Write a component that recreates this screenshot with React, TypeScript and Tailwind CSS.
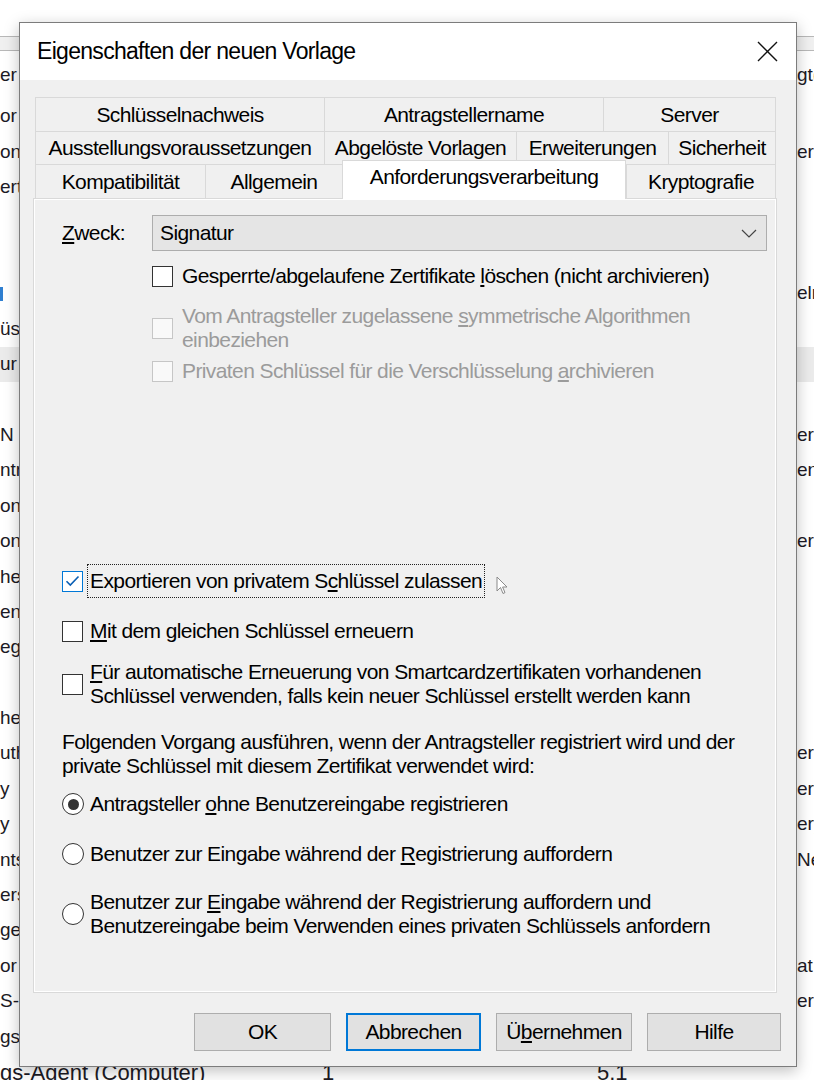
import { ReactNode } from "react";

const leftRows = [
  "or", "ons", "ert", "", "", "", "üs", "ur", "", "N", "ntr", "ont", "ont", "he",
  "en", "eg", "", "hea", "uth", "y", "y", "nts", "ers", "ge", "or", "S-", "gs",
];

const rightRows: Record<number, string> = {
  1: "er", 5: "eln", 9: "er", 10: "en", 12: "er", 18: "er", 19: "ery", 20: "ery", 21: "Ne", 24: "at", 25: "er",
};

function BgRow({ left, right, highlight, blue }: { left: string; right?: string; highlight?: boolean; blue?: boolean }) {
  return (
    <div className={`flex h-[35.4px] items-center justify-between text-[19px] ${highlight ? "bg-[#ebebeb]" : ""}`}>
      <div className="flex w-[30px] overflow-hidden whitespace-nowrap">
        {blue ? <span className="h-[14px] w-[3px] bg-[#2f7fd0]" /> : left}
      </div>
      <div className="w-[17px] overflow-hidden whitespace-nowrap">{right}</div>
    </div>
  );
}

function CheckBox({ checked, disabled }: { checked?: boolean; disabled?: boolean }) {
  const border = checked ? "border-[#0078d7]" : disabled ? "border-[#c6c6c6]" : "border-[#333]";
  return (
    <span className={`flex h-[21px] w-[21px] shrink-0 items-center justify-center border ${border} ${disabled ? "bg-[#f9f9f9]" : "bg-white"}`}>
      {checked && (
        <svg width="15" height="12" viewBox="0 0 15 12">
          <path d="M1.5 6.2 L5.3 10 L13.5 1.5" fill="none" stroke="#0a5fb4" strokeWidth="1.6" />
        </svg>
      )}
    </span>
  );
}

function Radio({ checked }: { checked?: boolean }) {
  return (
    <span className="flex h-[22px] w-[22px] shrink-0 items-center justify-center rounded-full border border-[#333] bg-white">
      {checked && <span className="h-[11px] w-[11px] rounded-full bg-[#333]" />}
    </span>
  );
}

function Tab({ w, children, selected }: { w: string; children: ReactNode; selected?: boolean }) {
  if (selected)
    return (
      <div className={`${w} relative z-10 mb-[-1px] flex h-[39px] items-center justify-center border-x border-t border-[#d9d9d9] bg-white pb-[6px]`}>
        {children}
      </div>
    );
  return (
    <div className={`${w} flex h-full items-center justify-center border-l border-t border-[#d9d9d9] bg-[#f0f0f0] last:border-r`}>
      {children}
    </div>
  );
}

function Btn({ w, children, focus }: { w: string; children: ReactNode; focus?: boolean }) {
  return (
    <div
      className={`${w} flex h-[38px] items-center justify-center bg-[#e1e1e1] ${
        focus ? "border-2 border-[#0078d7]" : "border border-[#adadad]"
      }`}
    >
      {children}
    </div>
  );
}

export default function App() {
  return (
    <div
      className="relative h-[1080px] w-[814px] overflow-hidden bg-white text-[22px] text-[#1c1a24]"
      style={{ fontFamily: "'Liberation Sans', Arial, sans-serif" }}
    >
      {/* list behind the dialog */}
      <div className="pt-[36px]">
        <div className="h-[15px] border-y border-[#b8b8b8] bg-[#f0f0f0]" />
        <div className="flex h-[48px] items-center justify-between text-[19px]">
          <div className="w-[30px] overflow-hidden whitespace-nowrap">er</div>
          <div className="w-[17px] overflow-hidden whitespace-nowrap">gt(</div>
        </div>
        {leftRows.map((l, i) => (
          <BgRow key={i} left={l} right={rightRows[i]} highlight={i === 7} blue={i === 5} />
        ))}
        <div className="flex h-[35.4px] items-center whitespace-nowrap">
          <span className="w-[322px]">gs-Agent (Computer)</span>
          <span className="w-[275px]">1</span>
          <span>5.1</span>
        </div>
      </div>

      {/* dialog */}
      <div className="absolute left-[19px] top-[22px] flex h-[1045px] w-[778px] flex-col border border-[#7c7c7c] bg-[#f0f0f0] text-[21px] tracking-[-0.6px] text-black shadow-[0_4px_14px_rgba(0,0,0,0.25)]">
        <div className="flex h-[57px] shrink-0 items-center justify-between bg-white pl-[17px] pr-[18px]">
          <span className="text-[23px] tracking-[-0.7px]">Eigenschaften der neuen Vorlage</span>
          <svg width="21" height="21" viewBox="0 0 21 21">
            <path d="M1 1 L20 20 M20 1 L1 20" stroke="#111" strokeWidth="1.4" />
          </svg>
        </div>

        <div className="flex flex-1 flex-col pl-[13px] pr-[15px] pt-[17px] whitespace-nowrap">
          {/* tab strip */}
          <div className="ml-[2px] mr-[5px]">
            <div className="flex h-[34px]">
              <Tab w="w-[289px]">Schlüsselnachweis</Tab>
              <Tab w="w-[279px]">Antragstellername</Tab>
              <Tab w="w-[173px]">Server</Tab>
            </div>
            <div className="flex h-[33px]">
              <Tab w="w-[289px]">Ausstellungsvoraussetzungen</Tab>
              <Tab w="w-[192px]">Abgelöste Vorlagen</Tab>
              <Tab w="w-[152px]">Erweiterungen</Tab>
              <Tab w="w-[108px]">Sicherheit</Tab>
            </div>
            <div className="flex h-[34px] items-end">
              <Tab w="w-[170px]">Kompatibilität</Tab>
              <Tab w="w-[137px]">Allgemein</Tab>
              <Tab w="w-[284px]" selected>
                Anforderungsverarbeitung
              </Tab>
              <div className="flex h-[34px] w-[150px] items-center justify-center border-x border-t border-[#d9d9d9] bg-[#f0f0f0]">
                Kryptografie
              </div>
            </div>
          </div>

          {/* page */}
          <div className="mr-[4px] flex h-[795px] flex-col border border-[#d9d9d9] bg-[#f0f0f0] pl-[28px] pr-[9px] pt-[16px] leading-[24px] shadow-[inset_0_0_0_1px_#fff]">
            <div className="flex h-[36px] items-center">
              <span className="w-[90px]">
                <u className="underline-offset-2">Z</u>weck:
              </span>
              <div className="flex h-[36px] flex-1 items-center justify-between border border-[#adadad] bg-[#e5e5e5] pl-[7px] pr-[9px]">
                <span>Signatur</span>
                <svg width="16" height="9" viewBox="0 0 16 9">
                  <path d="M1 1 L8 8 L15 1" fill="none" stroke="#444" strokeWidth="1.2" />
                </svg>
              </div>
            </div>

            <div className="ml-[90px] mt-[13px] flex items-center gap-[9px]">
              <CheckBox />
              <span>
                Gesperrte/abgelaufene Zertifikate <u className="underline-offset-2">l</u>öschen (nicht archivieren)
              </span>
            </div>

            <div className="ml-[90px] mt-[16px] flex items-center gap-[9px] text-[#9b9b9b]">
              <CheckBox disabled />
              <span>
                Vom Antragsteller zugelassene <u className="underline-offset-2">s</u>ymmetrische Algorithmen
                <br />
                einbeziehen
              </span>
            </div>

            <div className="ml-[90px] mt-[7px] flex items-center gap-[9px] text-[#9b9b9b]">
              <CheckBox disabled />
              <span>
                Privaten Schlüssel für die Verschlüsselung <u className="underline-offset-2">a</u>rchivieren
              </span>
            </div>

            <div className="mt-[181px] flex items-center gap-[4px]">
              <CheckBox checked />
              <span className="border border-dotted border-[#222] px-[2px] py-[4px]">
                Exportieren von privatem S<u className="underline-offset-2">c</u>hlüssel zulassen
              </span>
            </div>

            <div className="mt-[21px] flex items-center gap-[7px]">
              <CheckBox />
              <span>
                <u className="underline-offset-2">M</u>it dem gleichen Schlüssel erneuern
              </span>
            </div>

            <div className="mt-[17px] flex items-center gap-[7px]">
              <CheckBox />
              <span>
                <u className="underline-offset-2">F</u>ür automatische Erneuerung von Smartcardzertifikaten vorhandenen
                <br />
                Schlüssel verwenden, falls kein neuer Schlüssel erstellt werden kann
              </span>
            </div>

            <p className="mt-[22px]">
              Folgenden Vorgang ausführen, wenn der Antragsteller registriert wird und der
              <br />
              private Schlüssel mit diesem Zertifikat verwendet wird:
            </p>

            <div className="mt-[14px] flex items-center gap-[6px]">
              <Radio checked />
              <span>
                Antragsteller <u className="underline-offset-2">o</u>hne Benutzereingabe registrieren
              </span>
            </div>

            <div className="mt-[26px] flex items-center gap-[6px]">
              <Radio />
              <span>
                Benutzer zur Eingabe während der <u className="underline-offset-2">R</u>egistrierung auffordern
              </span>
            </div>

            <div className="mt-[24px] flex items-center gap-[6px]">
              <Radio />
              <span>
                Benutzer zur <u className="underline-offset-2">E</u>ingabe während der Registrierung auffordern und
                <br />
                Benutzereingabe beim Verwenden eines privaten Schlüssels anfordern
              </span>
            </div>
          </div>

          {/* buttons */}
          <div className="mt-[20px] flex justify-end gap-[15px]">
            <Btn w="w-[137px]">OK</Btn>
            <Btn w="w-[135px]" focus>
              Abbrechen
            </Btn>
            <Btn w="w-[136px]">
              Ü<u className="underline-offset-2">b</u>ernehmen
            </Btn>
            <Btn w="w-[134px]">Hilfe</Btn>
          </div>
        </div>
      </div>

      {/* mouse pointer */}
      <svg className="absolute left-[496px] top-[576px]" width="12" height="19" viewBox="0 0 12 19">
        <path d="M1 1 L1 15 L4.5 11.5 L7 17.5 L9 16.6 L6.6 11 L11 11 Z" fill="#fff" stroke="#8a8a8a" strokeWidth="1" />
      </svg>
    </div>
  );
}
